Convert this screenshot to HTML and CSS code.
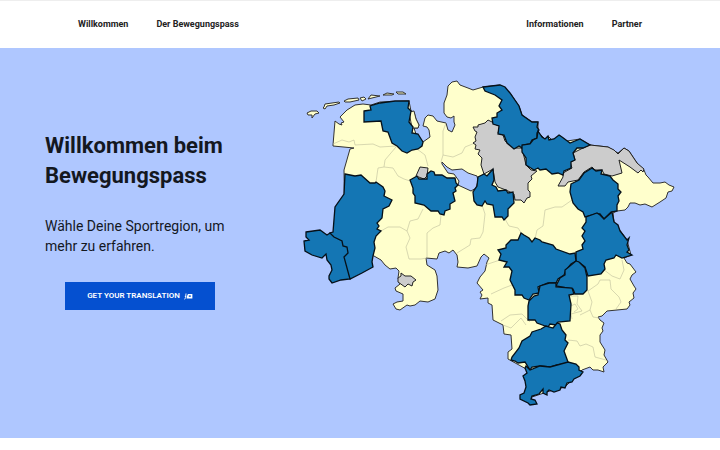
FILE: index.html
```html
<!DOCTYPE html>
<html lang="de">
<head>
    <meta charset="UTF-8">
    <meta name="viewport" content="width=device-width, initial-scale=1.0">
    <title>Bewegungspass</title>
    <link rel="stylesheet" href="styles.css">
</head>
<body>
    <header class="header">
        <nav class="nav">
            <a href="#">Willkommen</a>
            <a href="#">Der Bewegungspass</a>
        </nav>
        <nav class="nav">
            <a href="#">Informationen</a>
            <a href="#">Partner</a>
        </nav>
    </header>

    <main class="hero">
        <div class="intro">
            <h1>Willkommen beim Bewegungspass</h1>
            <p>Wähle Deine Sportregion, um mehr zu erfahren.</p>
            <button class="button" type="button">
                GET YOUR TRANSLATION
                <svg class="icon" viewBox="0 0 9 8" aria-hidden="true">
                    <path d="M2 1.5L1.6 5.6.6 7.4M.8 4.4h1.4" fill="none" stroke="#fff" stroke-width=".9"/>
                    <path d="M4 2h4.4v4.6H2.6L3 4z" fill="#fff"/>
                    <path d="M4.8 3.4h2v1.4h-2z" fill="#0550d0"/>
                </svg>
            </button>
        </div>

        <svg class="map" viewBox="300 76 380 334" role="img" aria-label="Karte der Sportregionen">
            <!-- Land -->
            <path class="land" d="M333 145L335 121L339 124L342 125L341 123L344 122L340 117L347 110L355 105L363 104L371 105L380 102L409 101L411 111L414 112L416 119L419 125L418 128L414 128L416 134L423 142L430 137L429 130L427 127L423 126L425 118L428 115L433 116L437 121L446 123L448 130L452 132L455 125L454 122V116L451 118L447 117L444 113V103L447 95L448 86L452 82L457 81L460 85L468 88L473 90L483 87L500 85L510 93L519 106L522 115L532 122H538V132L545 139L548 136L553 141L559 135L567 141L580 139L590 145L608 147L618 153L624 148L629 151L637 163L644 170L646 175L648 177L653 183L660 183L665 182L669 185L674 187L672 191L668 192L666 198L660 202L652 207L645 204L640 205L635 203L630 203L628 207L625 210L617 211L613 213L614 222L627 240L631 255L624 258L627 263L630 264L636 272L632 275L630 279L634 286L636 289L633 293L634 298L629 302L630 305L627 309L607 311L602 316L598 317L600 320L604 323L602 328L603 331L600 335L600 342L605 350L604 355L608 362L603 367L604 372L598 370L593 370L590 367L582 370L565 387L550 391L532 397L528 370L508 359L508 352L512 349L511 335L504 334L503 325L493 320L492 305L488 303V298L480 299L482 295L480 292L483 290L477 283L480 277L485 271L487 262L489 258L484 254L481 257L477 266L468 268L457 267L458 262L457 255L453 250L449 253L445 251L439 253L437 259L426 258L427 265L435 270L437 276L438 290L435 299L428 302L420 301L415 305L410 306L407 305L400 310L396 309L393 304L397 302L403 301V294L396 291L395 288L400 284L398 278L399 271L396 268L390 269L385 265L381 260L374 256L345 250L344 170L350 149L354 148L333 146Z"/>

            <!-- Inseln -->
            <g class="land">
                <path d="M307 113L311 111L317 111L319 113L315 114L312 118V115L308 115Z"/>
                <path d="M324 107L325 104L339 102L340 103L334 105L327 106L325 109L323 108Z"/>
                <path d="M344 101L348 99L358 98L359 100L350 102H345Z"/>
                <path d="M360 98L364 97L366 99L362 101Z"/>
                <path d="M368 99L371 95L380 96L376 97Z"/>
                <path d="M383 95L387 93L394 94L392 95Z"/>
                <path d="M396 92L403 92L406 94L398 94Z"/>
                <path d="M409 112L414 111L416 119L419 125L418 128L412 128Z"/>
            </g>

            <!-- Kreisgrenzen -->
            <g class="border">
                <path d="M333 144L342 140L349 142L354 140L355 145L373 144L380 147L396 146M396 147L385 160L384 167L378 168L376 182M384 167L393 168L398 176L404 179L410 181M417 149L425 155L428 166"/>
                <path d="M446 123L443 131L443 155L441 162M443 155L453 157L462 153L465 147L475 143M441 162L447 170"/>
                <path d="M381 231L388 227L400 227L407 231L410 221L418 219L423 209M407 231L410 238L406 247L409 259L421 259L427 258L427 233L433 228L440 225L441 215M482 205L485 214L483 232L480 238L471 239L470 245L457 253"/>
                <path d="M505 219L509 226L518 228L522 234M535 239L537 230L543 226L545 210L555 207L562 207L572 200M485 265L500 260M491 294L504 288L512 285M501 321L510 315L522 314L530 322M503 325L511 328L521 318L526 325"/>
                <path d="M603 269L612 276L620 279L624 270L622 260M588 291L598 284L600 280L610 280L611 289L619 297L621 302L616 309M588 291L592 302L590 310L593 317L599 318M570 296L578 296L577 304L582 311L571 314L572 319M571 306L575 304L578 309L574 312M590 310L580 315M568 340L577 341L580 346L586 344L593 347L595 357L606 360"/>
            </g>

            <!-- Bremen -->
            <path class="bremen" d="M442 162L447 167L452 170L462 169L468 173L477 176L478 181L476 188L471 191L458 185L459 181L454 174L448 173L442 164Z"/>

            <!-- Noch nicht aktive Regionen -->
            <g class="inactive">
                <path d="M492 122L488 120L485 123L478 125L478 127L473 127L475 131L477 132L475 137L476 141L473 143L476 145L475 149L480 150L478 154L482 158L481 165L484 174L493 169L495 182L498 187L506 190L514 194L515 200H521L524 203L527 198L530 197V192L528 190V183L532 179L531 176L537 171L531 170L526 165L522 148H514L505 141L503 135L498 133L500 126L494 124Z"/>
                <path d="M590 145L583 148L573 153L575 160L570 162L572 168L563 173V177L558 186H565L568 182L578 180L584 172L592 167L595 170H602L604 174L612 176L622 173L619 160L630 167L638 173L641 170L643 172L644 169L637 163L629 151L624 148L618 154L614 150L608 147Z"/>
                <path d="M416 176L420 167L428 168L427 176L424 179Z"/>
                <path d="M398 278L401 276V273L405 276L411 276L416 280L413 282L412 286L408 284L405 287L398 282Z"/>
            </g>

            <!-- Aktive Regionen -->
            <g class="active">
                <path d="M364 111L371 110L370 106L380 103L395 101L409 101L408 108L411 111L409 122L413 127L412 133L418 134L423 142L422 146L418 149L412 150L407 153L402 151L397 146L392 143L388 132L383 131L381 121L364 122Z"/>
                <path d="M483 87L500 85L505 87L510 93L519 106L522 115L532 122H538L537 127L539 130L537 133L537 138L532 140L530 144L523 145L522 148L519 146L514 149L507 143L504 135L498 134L499 126L493 124L492 118L497 117V113L502 110L499 106L502 100L495 95L485 91Z"/>
                <path d="M538 131L542 137L545 139L548 136L549 140L554 139L559 135L562 137L570 143L580 139L590 145L583 148H577L573 153L575 160L571 162L571 168L564 171L563 175L558 173L552 174L546 169L540 170L538 168L534 170L526 165V158L522 152V145L530 144L533 140L537 138Z"/>
                <path d="M345 174L355 176L361 175L370 183H375L376 182L383 187L385 191L384 196L392 200L389 206L383 209L382 218L377 223L379 226L377 229L381 231L376 236L374 242L375 248L373 256L372 262L373 267L362 273L350 279L330 233L333 232L335 207L344 194Z"/>
                <path d="M306 232L320 230L327 235L330 233L334 237L342 241L343 246L347 247L348 253L344 257L350 279L341 280L332 283L329 279L329 276L332 270L331 265L327 260L326 254L322 258L312 255L305 251L304 241L309 240L306 237Z"/>
                <path d="M410 180L417 176L419 179L427 179V174L431 171L434 172L435 175L442 175L447 178L455 178L456 183L458 185L455 188L456 191L453 193L455 201L450 204L450 209L445 211L444 215L440 214L438 211L431 211L424 205L415 203V196L413 193V188Z"/>
                <path d="M478 177L484 174L487 176L493 169L494 180L492 185L496 187L498 191L506 190L508 193L513 192L514 203L508 209V216L504 220L502 217L495 217L493 205L487 204L485 201L482 206L477 205L474 201L473 192L477 186Z"/>
                <path d="M571 184L579 180L584 173L592 168L596 171L602 170L601 174L610 176L613 180L618 184V189L621 192L618 196L619 201L617 205V211L611 212L604 219L600 214H596L585 217L583 212L578 209L573 203L570 192Z"/>
                <path d="M586 217L597 213L600 215L604 219L612 212L614 222L618 225L620 231L627 240L629 238L627 245L629 250L627 252L632 255L622 258L616 255L614 258L606 260L604 264L605 269L601 274L588 276L585 267L580 263L576 261V252L583 249L582 245L585 241L582 236L585 231L582 228L586 222Z"/>
                <path d="M498 250L506 248V245L511 240H518L521 233L524 235L529 238L532 242L535 238L540 240L542 242L553 245L556 249L570 254L575 253L576 261L571 264L566 270L564 275L558 279L556 283L548 283L538 287L539 293L533 294L529 300L524 298L522 295L515 295V290L510 280L512 271L509 267H504L507 262L499 260L501 254Z"/>
                <path d="M576 261L579 262L585 268L587 277V290L583 294H575L573 289L556 286L560 278L565 275V270Z"/>
                <path d="M556 283V287L572 288L574 294L569 295L571 304L570 321L558 322L556 325L550 324L548 327L537 323L535 320H528L528 306L529 301L534 296L538 295L540 286L550 283Z"/>
                <path d="M541 329L546 326L553 328L557 323L560 324L562 330L566 335L565 340L568 343L564 351L568 362L564 364L557 365L550 367L540 366L532 367L530 370L525 362L518 363L515 361L511 360L512 357L519 348L522 341L530 336L532 332Z"/>
                <path d="M526 366L530 370L540 366L550 367L568 362L576 364L579 367V370L583 372L580 376L574 379L572 382L567 383L565 388L561 387L560 390L554 392L549 390L547 392V395L543 393V389L539 394L532 396L531 399L535 400L537 404L530 405L528 403L520 399V395L524 393L526 387L525 381L523 376L527 373L525 368Z"/>
            </g>
        </svg>
    </main>
</body>
</html>
```

FILE: styles.css
```css
body {
    margin: 0;
    background-color: #fff;
    color: #14181f;
    font-family: Roboto, sans-serif;
}

.header {
    display: flex;
    justify-content: space-between;
    align-items: center;
    box-sizing: border-box;
    height: 48px;
    padding: 0 78px 2px;
    border-top: 1px solid #eee;
}

.nav {
    display: flex;
    gap: 28px;
}

.nav a {
    color: #222;
    font-size: 9px;
    font-weight: bold;
    line-height: 12px;
    text-decoration: none;
}

.hero {
    display: flex;
    align-items: center;
    gap: 65px;
    box-sizing: border-box;
    padding: 28px 40px 28px 45px;
    background-color: #afc7ff;
}

.intro {
    flex: 0 0 190px;
    padding-bottom: 46px;
}

.intro h1 {
    margin: 0 0 25px;
    font-size: 22px;
    line-height: 30px;
}

.intro p {
    margin: 0 0 26px;
    font-size: 14px;
    line-height: 20px;
}

.button {
    display: flex;
    align-items: center;
    justify-content: center;
    gap: 4px;
    height: 28px;
    margin: 0 auto;
    padding: 0 22px;
    border: none;
    background-color: #0550d0;
    color: #fff;
    font-family: inherit;
    font-size: 8px;
    font-weight: 600;
    line-height: 12px;
    white-space: nowrap;
    cursor: pointer;
}

.icon {
    width: 9px;
    height: 8px;
}

.map {
    flex: 1;
    min-width: 0;
}

.land {
    fill: #ffffcc;
    stroke: #333;
    stroke-width: 1;
}

.border {
    fill: none;
    stroke: #bdbd9c;
    stroke-width: 0.6;
}

.bremen {
    fill: #afc7ff;
    stroke: #333;
    stroke-width: 1;
}

.inactive {
    fill: #ccc;
    stroke: #222;
    stroke-width: 1;
}

.active {
    fill: #1476b4;
    stroke: #061018;
    stroke-width: 1.3;
}
```
